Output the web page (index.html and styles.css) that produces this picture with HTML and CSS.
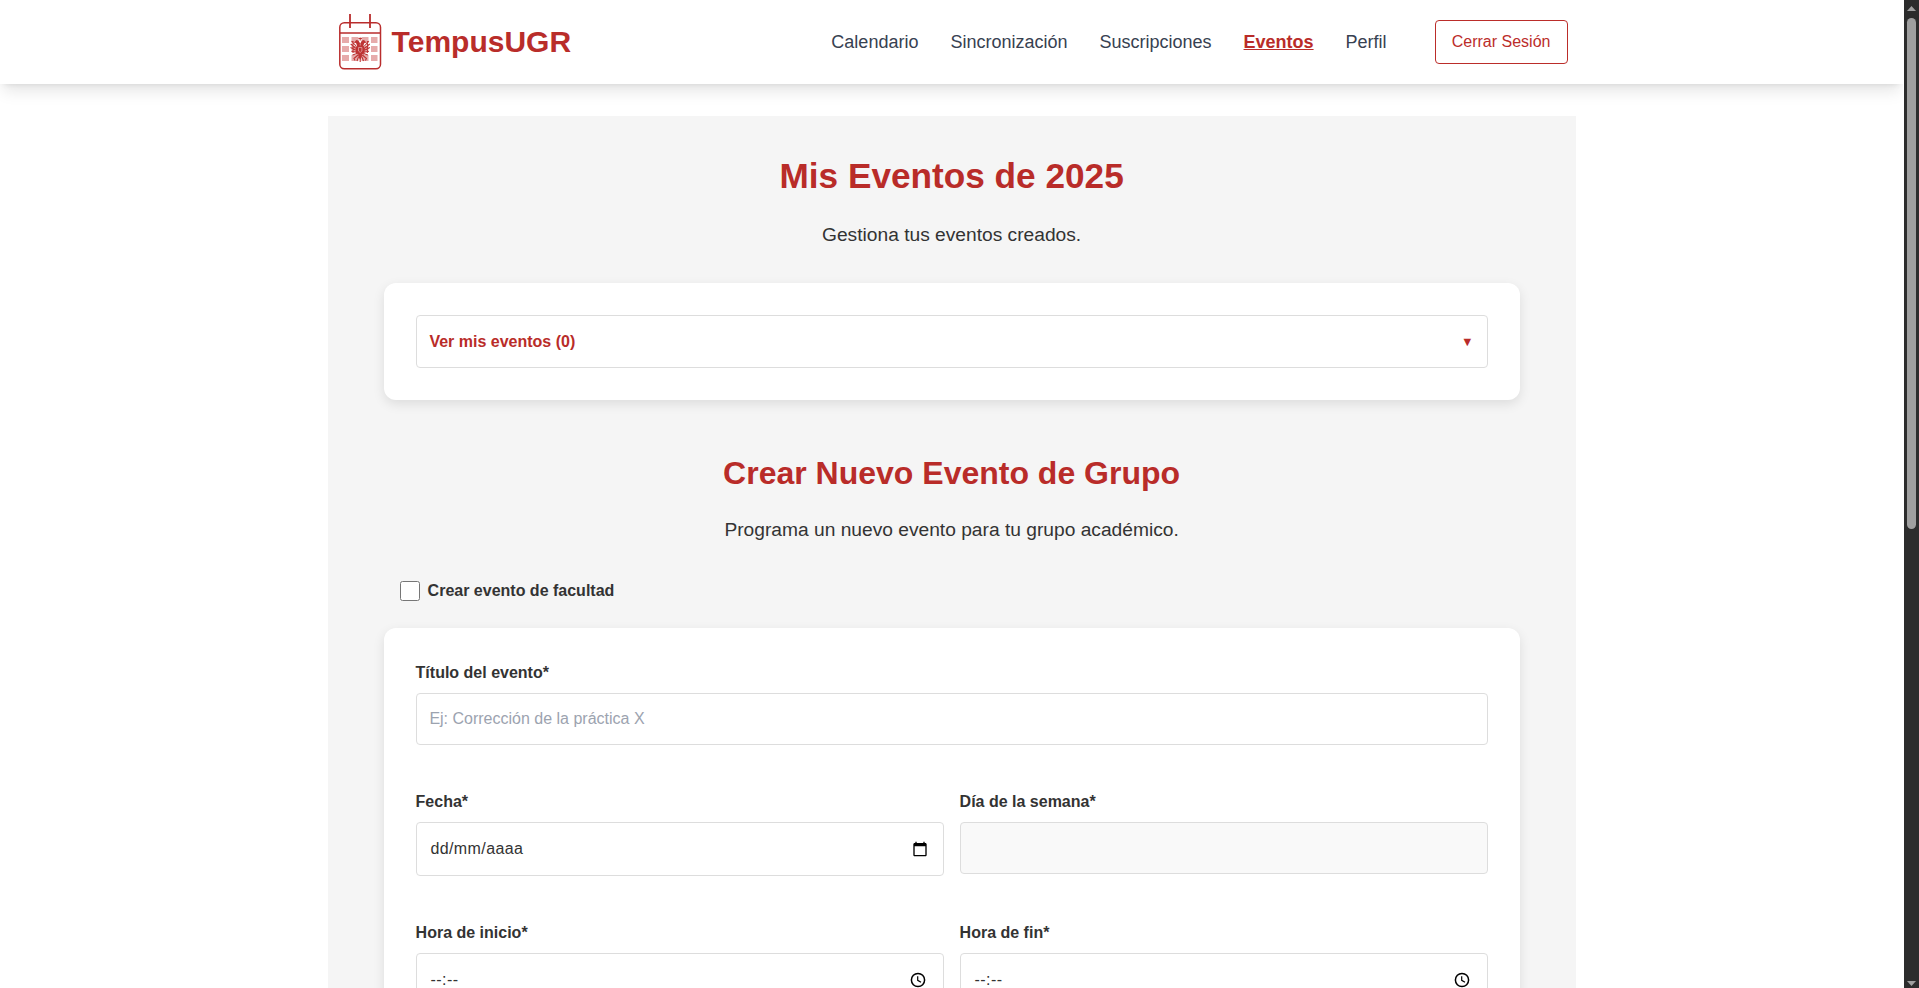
FILE: index.html
```html
<!DOCTYPE html>
<html lang="es">
<head>
<meta charset="utf-8">
<title>TempusUGR</title>
<link rel="stylesheet" href="styles.css">
</head>
<body>
<div class="app">
<div class="page">
  <header class="header">
    <div class="header-inner">
      <a class="brand">
        <svg class="logo" width="48" height="60" viewBox="0 0 48 60">
          <path fill="#e6abab" d="M6 25h7v6H6zM6 34h7v6H6zM6 43h7v6H6zM15.500 25h7v6h-7zM25.500 25h7v6h-7zM15.500 34h7v6h-7zM25.500 34h7v6h-7zM15.500 43h7v6h-7zM25.500 43h7v6h-7zM35 25h6.500v6H35zM35 34h6.500v6H35zM35 43h6.500v6H35z"/>
          <g fill="none" stroke="#b92d2d">
            <rect x="3.800" y="10.800" width="40.700" height="46" rx="4.500" stroke-width="1.500"/>
            <path d="M4 21h40" stroke-width="1.600"/>
            <path d="M14 2v14M34 2v14" stroke-width="1.800"/>
          </g>
          <path fill="#bd3434" d="M20 31l-2-.6 2.400-2.400 2 .4 1.800 3 1.800-3 2-.4 2.400 2.400-2 .6-1 2.500 1.600 3-.5 5-2.500 3-1.800 3.500-1.800-3.500-2.500-3-.5-5 1.600-3z"/>
          <g fill="none" stroke="#bd3434" stroke-width="1.100">
            <path d="M24.200 25.500v3M22.500 26.500h3.400M20 34l-4.500-5M19.500 36l-4.800-4M19.500 38l-5-2.500M20 40l-4.500-.5M21 41.500l-4.500 1.500M28.400 34l4.500-5M28.900 36l4.800-4M28.900 38l5-2.500M28.400 40l4.500-.5M27.400 41.500l4.500 1.500M17 29v12M31.400 29v12"/>
            <path d="M22 43l-4 3.500 1 2M26.400 43l4 3.500-1 2M22.500 45l-1.500 4M26 45l1.500 4M24.200 45v5"/>
          </g>
          <path d="M22.500 35.500h3.400v3.500l-1.700 1.500-1.700-1.500zM24.200 31.500v2M21 42l1.500 1M27.400 42l-1.500 1" fill="none" stroke="#efc8c8" stroke-width=".6"/>
        </svg>
        <span class="brand-name">TempusUGR</span>
      </a>
      <nav class="nav">
        <a>Calendario</a>
        <a>Sincronización</a>
        <a>Suscripciones</a>
        <a class="active">Eventos</a>
        <a>Perfil</a>
        <button class="logout">Cerrar Sesión</button>
      </nav>
    </div>
  </header>
  <main class="content">
    <h1 class="title">Mis Eventos de 2025</h1>
    <p class="lead">Gestiona tus eventos creados.</p>
    <section class="card">
      <div class="summary"><span>Ver mis eventos (0)</span><span class="caret">▼</span></div>
    </section>
    <h2 class="subtitle">Crear Nuevo Evento de Grupo</h2>
    <p class="lead">Programa un nuevo evento para tu grupo académico.</p>
    <label class="check"><input type="checkbox" class="checkbox">Crear evento de facultad</label>
    <form class="card form">
      <div class="field">
        <label class="label">Título del evento*</label>
        <input class="control" type="text" placeholder="Ej: Corrección de la práctica X">
      </div>
      <div class="row">
        <div class="field">
          <label class="label">Fecha*</label>
          <div class="control picker">
            <span class="date">dd/mm/aaaa</span>
            <svg width="16" height="16" viewBox="0 0 24 24"><path d="M20 3h-1V1h-2v2H7V1H5v2H4c-1.100 0-2 .9-2 2v16c0 1.100.9 2 2 2h16c1.100 0 2-.9 2-2V5c0-1.100-.9-2-2-2zm0 18H4V8h16v13z"/></svg>
          </div>
        </div>
        <div class="field">
          <label class="label">Día de la semana*</label>
          <input class="control readonly" type="text" readonly>
        </div>
      </div>
      <div class="row">
        <div class="field">
          <label class="label">Hora de inicio*</label>
          <div class="control picker">
            <span class="time">--:--</span>
            <svg class="clock" width="16" height="16" viewBox="0 0 16 16" fill="none" stroke="#000"><circle cx="8" cy="8" r="6.600" stroke-width="1.500"/><path d="M7.700 4.300V8.300L11 10.300" stroke-width="1.200"/></svg>
          </div>
        </div>
        <div class="field">
          <label class="label">Hora de fin*</label>
          <div class="control picker">
            <span class="time">--:--</span>
            <svg class="clock" width="16" height="16" viewBox="0 0 16 16" fill="none" stroke="#000"><circle cx="8" cy="8" r="6.600" stroke-width="1.500"/><path d="M7.700 4.300V8.300L11 10.300" stroke-width="1.200"/></svg>
          </div>
        </div>
      </div>
    </form>
  </main>
</div>
<div class="scrollbar">
  <svg width="9" height="5" viewBox="0 0 9 5"><path d="M4.500 0L9 5H0z" fill="#9f9f9f"/></svg>
  <div class="thumb"></div>
  <svg class="down" width="9" height="5" viewBox="0 0 9 5"><path d="M4.500 5L9 0H0z" fill="#9f9f9f"/></svg>
</div>
</div>
</body>
</html>
```
FILE: styles.css
```css
* { box-sizing: border-box; margin: 0; padding: 0; }
body {
  font-family: "Liberation Sans", Arial, sans-serif;
  font-size: 16px;
  line-height: 24px;
  color: #333;
  background: #fff;
  overflow: hidden;
}
.app { display: flex; justify-content: space-between; height: 988px; overflow: hidden; }
.page { width: 1903.2px; height: 988px; overflow: hidden; }
.header {
  position: relative;
  height: 84px;
  background: #fff;
  box-shadow: 0 10px 15px -3px rgba(0,0,0,.1), 0 4px 6px -4px rgba(0,0,0,.1);
}
.header-inner {
  width: 1232px;
  height: 84px;
  margin: 0 auto;
  display: flex;
  align-items: center;
  justify-content: space-between;
}
.brand { display: flex; align-items: center; gap: 8px; color: #b92d2a; }
.logo { display: block; }
.brand-name { font-size: 30px; line-height: 36px; font-weight: 700; }
.nav { display: flex; align-items: center; gap: 32px; font-size: 18px; line-height: 28px; color: #374151; }
.nav .active { color: #b92c29; font-weight: 700; text-decoration: underline; }
.logout {
  margin-left: 16px;
  width: 133px;
  height: 44px;
  border: 1px solid #bb2d2a;
  border-radius: 4px;
  background: #fff;
  color: #bb2d2a;
  font: 16px "Liberation Sans", Arial, sans-serif;
}
.content { width: 1248px; margin: 32px auto 0; padding: 40px 56px; background: #f5f5f5; }
.title, .subtitle { text-align: center; color: #b92c29; line-height: 40px; font-weight: 700; }
.title { font-size: 35.2px; }
.subtitle { font-size: 32px; margin-top: 53px; }
.lead { margin-top: 24px; text-align: center; font-size: 19.2px; line-height: 29px; }
.subtitle + .lead { margin-top: 22px; }
.card {
  margin-top: 34px;
  padding: 32px;
  background: #fff;
  border-radius: 12px;
  box-shadow: 0 4px 12px rgba(0,0,0,.1);
}
.summary {
  height: 53px;
  padding: 0 13px 0 12.8px;
  border: 1px solid #ddd;
  border-radius: 4px;
  display: flex;
  align-items: center;
  justify-content: space-between;
  color: #b92c29;
  font-weight: 700;
}
.caret { font-size: 12.8px; }
.check { display: flex; align-items: center; gap: 8px; margin: 35px 0 0 16px; font-weight: 700; }
.checkbox { width: 20px; height: 20px; }
.form { margin-top: 25px; }
.label { display: block; margin-bottom: 8px; line-height: 25px; font-weight: 700; }
.control {
  display: block;
  width: 100%;
  height: 52px;
  padding: 0 12.8px;
  border: 1px solid #ddd;
  border-radius: 4px;
  background: #fff;
  color: #333;
  font: 16px "Liberation Sans", Arial, sans-serif;
}
.control::placeholder { color: #9ca3af; }
.readonly { background: #f9f9f9; }
.row { display: grid; grid-template-columns: 1fr 1fr; gap: 16px; margin-top: 44px; }
.picker { display: flex; height: 54px; align-items: center; justify-content: space-between; padding: 0 15px 0 13.8px; }
.clock { margin-right: 1.5px; }
.date { letter-spacing: .4px; }
.time { letter-spacing: .5px; }
.scrollbar { width: 15px; height: 988px; background: #2c2c2c; display: flex; flex-direction: column; align-items: center; padding: 6px 0 2px; }
.thumb { width: 9px; height: 511px; margin-top: 7px; border-radius: 5px; background: #9f9f9f; }
.down { margin-top: auto; }
```
